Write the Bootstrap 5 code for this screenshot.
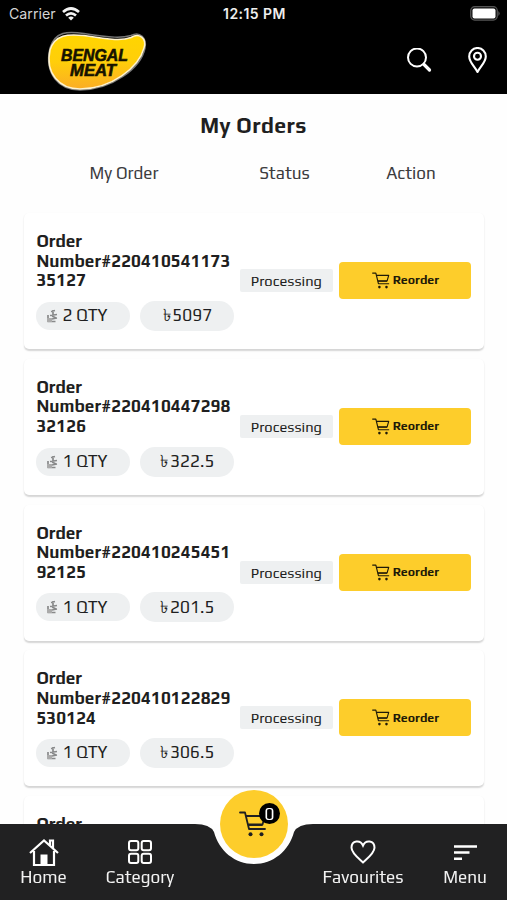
<!DOCTYPE html>
<html lang="en">
<head>
<meta charset="utf-8">
<meta name="viewport" content="width=device-width, initial-scale=1">
<title>My Orders</title>
<link href="https://cdn.jsdelivr.net/npm/bootstrap@5.3.0/dist/css/bootstrap.min.css" rel="stylesheet">
<style>
body{font-family:"Play","Noto Sans","Liberation Sans",sans-serif;color:#1f1f21;background:#fefefe;height:900px;overflow:hidden}
svg{display:block;flex:none}
.status-bar{height:27px;font:14.2px/27px Inter,Roboto,sans-serif;color:#d4d4d4;padding:0 7px 0 9px}
.status-bar>div{flex:1 0 0}
.clock{font-weight:600;font-size:14px;letter-spacing:.45px;color:#eee;text-align:center}
.brand-bar{height:67px;padding:0 16px 0 44px}
.page-title{font-size:21.2px;line-height:28px;letter-spacing:.4px;margin:0;padding-top:18px}
.heads{height:28px;margin-top:19px;padding-left:36px;font-size:17.1px;line-height:28px;color:#3c3c3e}
.c-order{width:198px;flex:none}
.c-status{width:93px;flex:none}
.c-action{width:132px;flex:none}
.orders{padding:26px 23px 0 24px}
.order-card{height:136px;margin-bottom:9.8px;padding:19px 12px 0 12.4px;border-radius:5px;background:#fff;box-shadow:0 1.5px 1.5px rgba(0,0,0,.16)}
.order-no{font-size:17px;font-weight:700;line-height:19.6px;margin-bottom:10px}
.order-no div{white-space:nowrap}
.digits{letter-spacing:.08px}
.pill{width:94px;height:28px;border-radius:15px;background:#eef0f1;font-size:17px;white-space:nowrap}
.pill.price{height:30px;letter-spacing:.15px}
.state{height:23px;margin-top:29px;background:#eef0f1;border-radius:2px;font-size:14.7px;line-height:23px}
.btn-reorder{width:132px;height:37px;margin-top:22px;background:#fdcd2b;border-radius:4px;font-size:12.3px;font-weight:700;color:#1f1a08;gap:3px}
.tabs{height:112px}
.tabs-shape{position:absolute;left:0;bottom:0}
.tab{position:relative;font-size:17.2px;line-height:20px;color:#f2f2f2;padding-bottom:13px}
.cart{position:absolute;left:220px;top:2px;width:68px;height:68px;background:#fdcd2b;border-radius:50%}
.cart-count{position:absolute;left:39px;top:13px;width:21px;height:21px;border-radius:50%;background:#000;color:#fff;font-size:17px;line-height:22px;text-align:center}
</style>
</head>
<body>
<svg width="0" height="0" class="position-absolute">
<defs>
<symbol id="cart" viewBox="0 0 28 26"><path d="M1 1.500h5l4 16.500h16M7 5h19l-2.500 8.500H9" fill="none" stroke="currentColor" stroke-width="1.800" stroke-linecap="round" stroke-linejoin="round"/><path d="M9 14.200h14.500" stroke="currentColor" stroke-width="1.500"/><circle cx="11.500" cy="23.300" r="2" fill="currentColor"/><circle cx="22.500" cy="23.300" r="2" fill="currentColor"/></symbol>
<symbol id="scale" viewBox="0 0 12 14"><path d="M7 1v5M5 2.500l4-1M4 6.500l7-1M2 6v3M6 7l4 2M1 10h5l5-1M1.500 12.500h8" fill="none" stroke="#88898a" stroke-width="1.700"/><path d="M1 9h5v4H1z" fill="#aaa"/></symbol>
</defs>
</svg>
<header class="bg-black">
  <div class="status-bar d-flex align-items-center">
    <div class="d-flex align-items-center"><span>Carrier</span>
      <svg style="margin-left:6px" width="18" height="14" viewBox="0 0 18 14" fill="none" stroke="#f3f3f3" stroke-width="2.700"><path d="M1 5Q9-2 17 5M4 8.500Q9 4.200 14 8.500"/><path d="M9 13.500 6.200 10.700Q9 8.500 11.800 10.700Z" fill="#f3f3f3" stroke="none"/></svg>
    </div>
    <div class="clock">12:15 PM</div>
    <div class="d-flex justify-content-end"><svg width="30" height="15" viewBox="0 0 30 15"><rect x=".7" y=".7" width="26.600" height="13.400" rx="4" fill="#111" stroke="#555" stroke-width="1.200"/><rect x="2.500" y="2.500" width="23" height="10" rx="2" fill="#fff"/><path d="M28.500 5q2 2.500 0 5z" fill="#777"/></svg></div>
  </div>
  <div class="brand-bar d-flex align-items-center">
    <svg width="106" height="67" viewBox="44 27 106 67">
      <defs><linearGradient id="gold" x1="0" y1="0" x2="0" y2="1"><stop stop-color="#ffd500"/><stop offset=".5" stop-color="#ffce0a"/><stop offset="1" stop-color="#fbad25"/></linearGradient></defs>
      <path d="M50 48C55 31 68 31 84 33.500C112 38 122 38 131 35.500C140 31 147 38 145 48C141 68 112 90 80 90C59 90 44 74 50 48Z" fill="none" stroke="#777" stroke-width="1.500"/>
      <path d="M50 50C55 34 68 34 84 35.500C112 40 122 41 131 37.500C139 32.500 147 38 144 48C139 67 112 89 80 89C60 89 45 74 50 50Z" fill="url(#gold)" stroke="#fff3cf" stroke-width="1.500"/>
      <g font-family="Liberation Sans, Arial, sans-serif" font-weight="700" font-style="italic" font-size="17" fill="#161200" stroke="#161200" stroke-width=".6"><text x="61" y="61" textLength="67" lengthAdjust="spacingAndGlyphs">BENGAL</text><text x="70" y="75.500" textLength="46" lengthAdjust="spacingAndGlyphs">MEAT</text></g>
    </svg>
    <svg class="ms-auto" width="26" height="26" viewBox="0 0 26 26" fill="none" stroke="#fff" stroke-linecap="round"><circle cx="11" cy="9.500" r="9" stroke-width="2"/><path d="m18 16.500 5.500 5.500" stroke-width="3.200"/></svg>
    <svg style="margin-left:36px;margin-right:3px" width="20" height="28" viewBox="0 0 20 28" fill="none" stroke="#fff" stroke-width="2.100"><path d="M9.500 25C6.500 19.500 1.200 15 1.200 9.500a8.300 8.500 0 0 1 16.600 0C17.800 15 12.500 19.500 9.500 25Z" stroke-linejoin="round"/><circle cx="9.500" cy="9.300" r="3.500"/></svg>
  </div>
</header>
<main>
  <h1 class="page-title text-center fw-bold">My Orders</h1>
  <div class="heads d-flex text-center">
    <div class="c-order" style="padding-right:22px">My Order</div><div class="c-status ms-1">Status</div><div class="c-action" style="margin-left:14px">Action</div>
  </div>
  <div class="orders"></div>
</main>
<nav class="tabs fixed-bottom d-flex align-items-end">
  <svg class="tabs-shape" width="507" height="76" viewBox="0 0 507 76"><path d="M208 0H300L290 25L254 40L218 25Z" fill="#fefefe"/><path d="M0 0H195Q210 0 214 8C219 27 235 40 254 40S289 27 294 8Q298 0 313 0H507V76H0Z" fill="#212122"/></svg>
  <div class="tab d-flex flex-column align-items-center" style="width:87px"><svg width="30" height="28" viewBox="0 0 30 28" fill="none" stroke="#fff" stroke-width="2.200"><path d="M1 14 15 1.500l14 12.500M5 12v14h20V12M21 6V1.500h3v8"/><path d="M11.500 15.500h7V26h-7z" fill="#fff" stroke="none"/></svg><span>Home</span></div>
  <div class="tab d-flex flex-column align-items-center" style="width:106px"><svg style="margin-bottom:3px" width="24" height="24" viewBox="0 0 24 24" fill="none" stroke="#fff" stroke-width="2"><rect x="1" y="1" width="9.300" height="9.300" rx="2"/><rect x="13.700" y="1" width="9.300" height="9.300" rx="2"/><rect x="1" y="13.700" width="9.300" height="9.300" rx="2"/><rect x="13.700" y="13.700" width="9.300" height="9.300" rx="2"/></svg><span>Category</span></div>
  <div class="tab d-flex flex-column align-items-center ms-auto" style="width:104px"><svg style="margin-bottom:3px" width="26" height="24" viewBox="0 0 26 24" fill="none" stroke="#fff" stroke-width="2"><path d="M13 22.500C8 18 1.500 13 1.500 7.800C1.500 0 10.500-.5 13 5.500C15.500-.5 24.500 0 24.500 7.800C24.500 13 18 18 13 22.500Z"/></svg><span>Favourites</span></div>
  <div class="tab d-flex flex-column align-items-center" style="width:100px;margin-right:-8px"><svg style="margin-bottom:6px" width="23" height="17" viewBox="0 0 23 17"><path d="M0 2.500h23M0 8.500h15.500M0 14.800h8" stroke="#fff" stroke-width="2.600"/></svg><span>Menu</span></div>
  <div class="cart"><svg style="margin:21px 0 0 19px" width="28" height="26"><use href="#cart"/></svg><span class="cart-count">0</span></div>
</nav>
<script>
const orders = [
  ["220410541173", "35127", "2", "5097"],
  ["220410447298", "32126", "1", "322.5"],
  ["220410245451", "92125", "1", "201.5"],
  ["220410122829", "530124", "1", "306.5"]
];
const rows = orders.map(([a, b, qty, price]) => `
<article class="order-card d-flex">
  <div class="c-order">
    <div class="order-no"><div>Order</div><div class="digits">Number#${a}</div><div class="digits">${b}</div></div>
    <div class="d-flex align-items-center">
      <div class="pill d-flex align-items-center"><svg style="margin:0 3px 0 9px" width="14" height="14"><use href="#scale"/></svg>${qty} QTY</div>
      <div class="pill price d-flex align-items-center justify-content-center ms-auto"><span style="margin-right:1.500px">৳</span>${price}</div>
    </div>
  </div>
  <div class="d-flex align-items-start" style="padding:8px 0 0 5.500px;gap:6.500px">
    <div class="c-status state text-center">Processing</div>
    <button class="btn btn-reorder border-0 p-0 d-flex align-items-center justify-content-center"><svg width="18" height="17"><use href="#cart"/></svg>Reorder</button>
  </div>
</article>`);
rows.push(`<article class="order-card"><div class="order-no">Order</div></article>`);
document.querySelector(".orders").innerHTML = rows.join("");
</script>
<script src="https://cdn.jsdelivr.net/npm/bootstrap@5.3.0/dist/js/bootstrap.bundle.min.js"></script>
</body>
</html>
